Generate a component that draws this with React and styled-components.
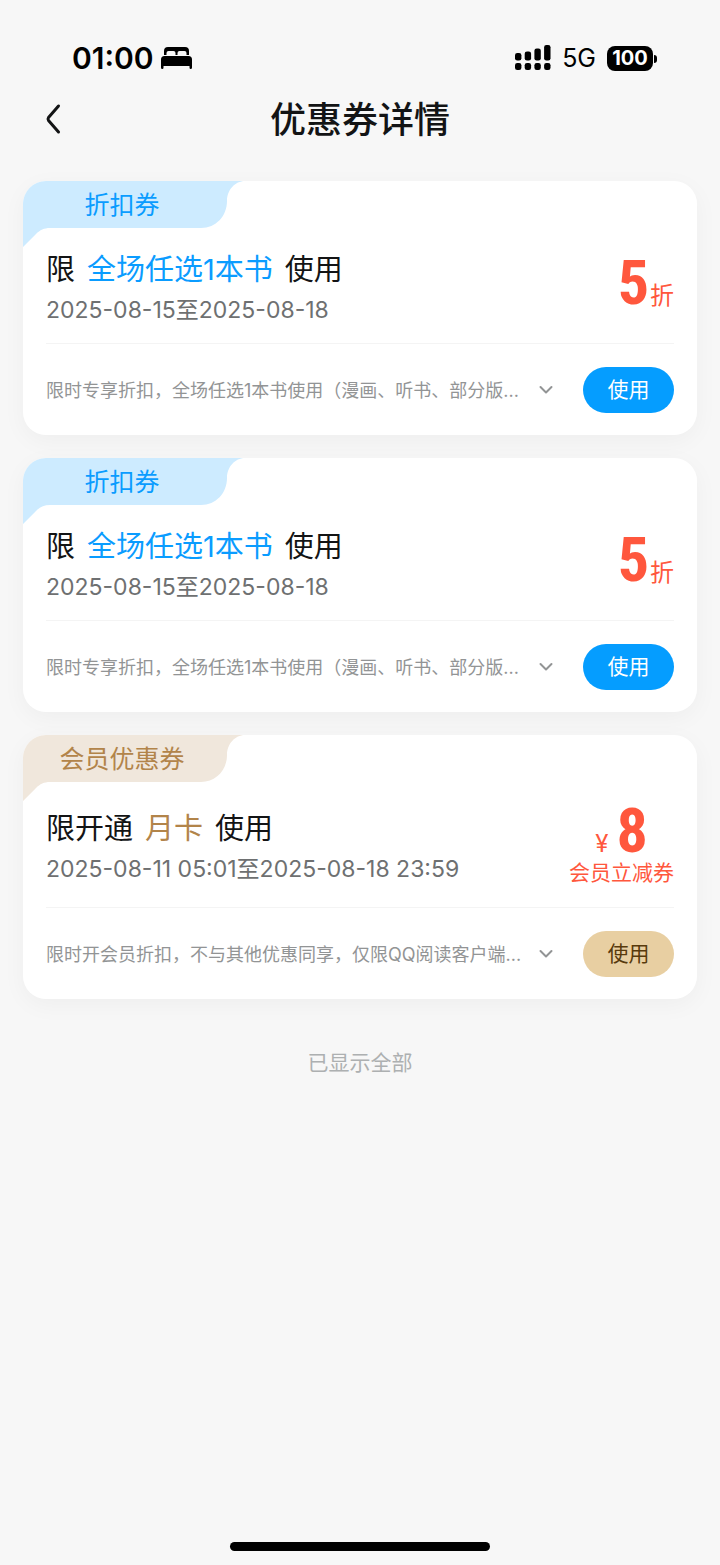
import React from "react";
import styled, { createGlobalStyle } from "styled-components";

const GlobalStyle = createGlobalStyle`
  * { box-sizing: border-box; }
  body {
    margin: 0;
    background: #f7f7f7;
    font-family: Inter, "Noto Sans CJK SC", sans-serif;
    color: #131415;
  }
  button { font-family: inherit; border: 0; padding: 0; cursor: pointer; }
  p, h1, h2 { margin: 0; font-weight: 400; }
`;

const themes = {
  discount: {
    tab: "#cdebff",
    tabText: "#0a9cff",
    accent: "#0a9cff",
    button: "#059dff",
    buttonText: "#ffffff",
  },
  member: {
    tab: "#f0e7dc",
    tabText: "#b2844a",
    accent: "#b2844a",
    button: "#e8cfa2",
    buttonText: "#583a0c",
  },
};

const Page = styled.div`
  min-height: 100vh;
  display: flex;
  flex-direction: column;
`;

const StatusBar = styled.div`
  display: flex;
  align-items: center;
  justify-content: space-between;
  padding: 38px 67px 0 72px;
  height: 78px;
  color: #000;
`;

const StatusGroup = styled.div`
  display: flex;
  align-items: center;
  gap: ${(p) => p.$gap}px;
`;

const Clock = styled.span`
  font-size: 30px;
  font-weight: 600;
  line-height: 40px;
`;

const Network = styled.span`
  font-size: 25px;
  line-height: 40px;
`;

const Battery = styled.span`
  position: relative;
  width: 46px;
  height: 25px;
  border-radius: 8px;
  background: #000;
  color: #fff;
  font-size: 20px;
  font-weight: 700;
  line-height: 25px;
  text-align: center;

  &::after {
    content: "";
    position: absolute;
    left: 47px;
    top: 9px;
    width: 3px;
    height: 8px;
    border-radius: 0 4px 4px 0;
    background: #000;
  }
`;

const Header = styled.header`
  display: grid;
  grid-template-columns: 1fr auto 1fr;
  align-items: center;
  height: 82px;
  padding: 0 42px;
`;

const BackButton = styled.button`
  width: 24px;
  height: 40px;
  display: flex;
  align-items: center;
  background: none;
  color: #131415;
`;

const PageTitle = styled.h1`
  padding-top: 2px;
  font-size: 36px;
  line-height: 56px;
  font-weight: 500;
`;

const CouponList = styled.main`
  display: flex;
  flex-direction: column;
  gap: 23px;
  padding: 21px 23px 0;
`;

const Shadow = styled.div`
  border-radius: 23px;
  box-shadow: 0 6px 24px rgba(0, 0, 0, 0.04);
`;

const Card = styled.article`
  position: relative;
  border-radius: 23px;
  background: #fff;
  overflow: hidden;
`;

const TabShape = styled.svg`
  position: absolute;
  left: 0;
  top: 0;
  fill: ${(p) => p.$fill};
`;

const TabLabel = styled.p`
  position: relative;
  width: 198px;
  height: 47px;
  text-align: center;
  font-size: 25px;
  line-height: 49px;
  color: ${(p) => p.$color};
`;

const Body = styled.div`
  display: flex;
  justify-content: space-between;
  align-items: center;
  margin: 0 23px;
  padding: ${(p) => (p.$tall ? "22px 0 19px" : "21px 0 14px")};
  border-bottom: 1px solid #f4f4f4;
`;

const Info = styled.div`
  display: flex;
  flex-direction: column;
  padding-top: ${(p) => (p.$tall ? 3 : 0)}px;
`;

const CouponTitle = styled.h2`
  display: flex;
  gap: 12px;
  font-size: 29px;
  line-height: 42px;
`;

const Accent = styled.span`
  color: ${(p) => p.$color};
`;

const Validity = styled.p`
  font-size: 23px;
  line-height: 38px;
  color: #6e7071;
`;

const Value = styled.div`
  display: flex;
  flex-direction: column;
  align-items: ${(p) => (p.$stacked ? "center" : "flex-end")};
  padding-bottom: ${(p) => (p.$stacked ? 0 : 12)}px;
  color: #ff573d;
`;

const Amount = styled.p`
  display: flex;
  align-items: baseline;
  gap: ${(p) => p.$gap}px;
`;

const Digit = styled.span`
  font-family: "Roboto Condensed", Roboto, sans-serif;
  font-size: 62px;
  font-weight: 700;
  line-height: 54px;
`;

const Unit = styled.span`
  font-size: 24px;
  line-height: 24px;
`;

const ValueNote = styled.p`
  font-size: 21px;
  line-height: 30px;
`;

const Terms = styled.div`
  display: flex;
  align-items: center;
  height: 91px;
  padding: 0 23px;
`;

const TermsText = styled.p`
  flex: 1;
  padding-top: 2px;
  font-size: 18px;
  line-height: 28px;
  color: #929495;
`;

const ExpandButton = styled.button`
  display: flex;
  align-items: center;
  justify-content: center;
  width: 24px;
  height: 24px;
  margin: 0 25px 0 11px;
  background: none;
  color: #929495;
`;

const UseButton = styled.button`
  width: 91px;
  height: 46px;
  padding-bottom: 3px;
  border-radius: 23px;
  font-size: 21px;
  background: ${(p) => p.$bg};
  color: ${(p) => p.$color};
`;

const EndNote = styled.p`
  margin-top: 48px;
  text-align: center;
  font-size: 21px;
  line-height: 32px;
  color: #adb0b1;
`;

const HomeIndicator = styled.div`
  width: 36%;
  height: 9px;
  margin: auto auto 14px;
  border-radius: 5px;
  background: #000;
`;

const BedIcon = () => (
  <svg width="31" height="22" viewBox="0 0 31 22" fill="#000" aria-hidden="true">
    <path d="M3 8V4Q3 0 7 0H24Q28 0 28 4V8H25.500V6Q25.500 4 23.500 4H18.500Q16.500 4 16.500 6V8H14.500V6Q14.500 4 12.500 4H7.500Q5.500 4 5.500 6V8Z" />
    <path d="M3.500 9H27.500Q31 9 31 12.500V20.500Q31 22 29.700 22Q28.500 22 28.500 20.500V19H2.500V20.500Q2.500 22 1.300 22Q0 22 0 20.500V12.500Q0 9 3.500 9Z" />
  </svg>
);

const SignalIcon = () => (
  <svg width="36" height="26" viewBox="0 0 36 26" fill="#000" aria-hidden="true">
    {[8, 6.500, 3.500, 0].map((top, i) => (
      <g key={top}>
        <rect x={i * 9.700} y={top} width="6.400" height={15.500 - top} rx="2.300" />
        <rect x={i * 9.700} y="18" width="6.400" height="7" rx="2.300" />
      </g>
    ))}
  </svg>
);

const BackIcon = () => (
  <svg width="20" height="32" viewBox="0 0 20 32" fill="none" stroke="currentColor" strokeWidth="3" strokeLinecap="round" strokeLinejoin="round" aria-hidden="true">
    <path d="M16.500 3L6.500 14.500Q5.500 16 6.500 17.500L16.500 29" />
  </svg>
);

const ChevronIcon = () => (
  <svg width="14" height="10" viewBox="0 0 14 10" fill="none" stroke="currentColor" strokeWidth="2" strokeLinecap="round" strokeLinejoin="round" aria-hidden="true">
    <path d="M1.500 2L7 7.500L12.500 2" />
  </svg>
);

const coupons = [
  {
    id: 1,
    kind: "discount",
    tag: "折扣券",
    title: ["限", "全场任选1本书", "使用"],
    validity: "2025-08-15至2025-08-18",
    amount: "5",
    terms: "限时专享折扣，全场任选1本书使用（漫画、听书、部分版...",
  },
  {
    id: 2,
    kind: "discount",
    tag: "折扣券",
    title: ["限", "全场任选1本书", "使用"],
    validity: "2025-08-15至2025-08-18",
    amount: "5",
    terms: "限时专享折扣，全场任选1本书使用（漫画、听书、部分版...",
  },
  {
    id: 3,
    kind: "member",
    tag: "会员优惠券",
    title: ["限开通", "月卡", "使用"],
    validity: "2025-08-11 05:01至2025-08-18 23:59",
    amount: "8",
    terms: "限时开会员折扣，不与其他优惠同享，仅限QQ阅读客户端...",
  },
];

function Coupon({ kind, tag, title, validity, amount, terms }) {
  const c = themes[kind];
  const member = kind === "member";
  return (
    <Shadow>
      <Card>
        <TabShape $fill={c.tab} width="222" height="66" viewBox="0 0 222 66" aria-hidden="true">
          <path d="M0 0H222C212 0 204 9 204 20C204 35 193 47 178 47H27C21 47 17 49 13 53L0 66Z" />
        </TabShape>
        <TabLabel $color={c.tabText}>{tag}</TabLabel>
        <Body $tall={member}>
          <Info $tall={member}>
            <CouponTitle>
              <span>{title[0]}</span>
              <Accent $color={c.accent}>{title[1]}</Accent>
              <span>{title[2]}</span>
            </CouponTitle>
            <Validity>{validity}</Validity>
          </Info>
          <Value $stacked={member}>
            {member ? (
              <>
                <Amount $gap={8}>
                  <Unit>¥</Unit>
                  <Digit>{amount}</Digit>
                </Amount>
                <ValueNote>会员立减券</ValueNote>
              </>
            ) : (
              <Amount $gap={1}>
                <Digit>{amount}</Digit>
                <Unit>折</Unit>
              </Amount>
            )}
          </Value>
        </Body>
        <Terms>
          <TermsText>{terms}</TermsText>
          <ExpandButton aria-label="展开">
            <ChevronIcon />
          </ExpandButton>
          <UseButton $bg={c.button} $color={c.buttonText}>使用</UseButton>
        </Terms>
      </Card>
    </Shadow>
  );
}

export default function App() {
  return (
    <Page>
      <GlobalStyle />
      <StatusBar>
        <StatusGroup $gap={7}>
          <Clock>01:00</Clock>
          <BedIcon />
        </StatusGroup>
        <StatusGroup $gap={11}>
          <SignalIcon />
          <Network>5G</Network>
          <Battery>100</Battery>
        </StatusGroup>
      </StatusBar>
      <Header>
        <BackButton aria-label="返回">
          <BackIcon />
        </BackButton>
        <PageTitle>优惠券详情</PageTitle>
      </Header>
      <CouponList>
        {coupons.map((coupon) => (
          <Coupon key={coupon.id} {...coupon} />
        ))}
      </CouponList>
      <EndNote>已显示全部</EndNote>
      <HomeIndicator />
    </Page>
  );
}
